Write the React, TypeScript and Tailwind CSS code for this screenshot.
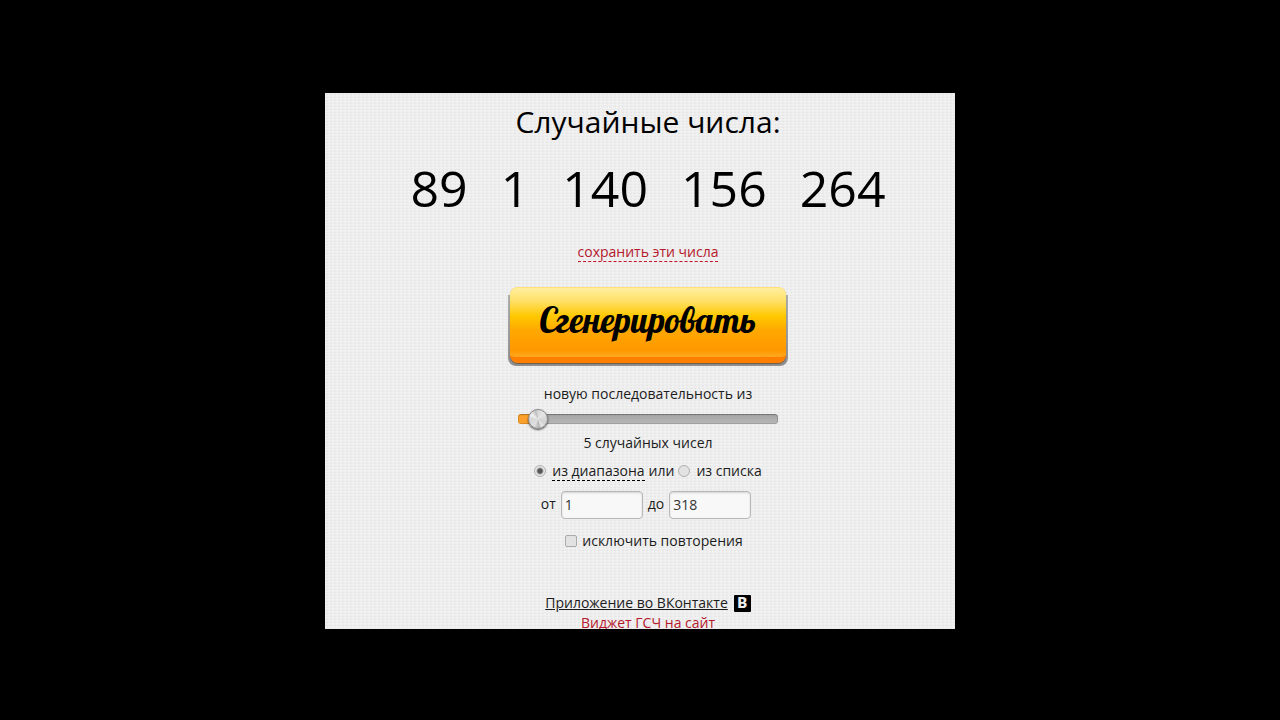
import { useState } from 'react'

type NumberFieldProps = {
  id: string
  label: string
  value: string
  onChange: (value: string) => void
}

const numbers = [89, 1, 140, 156, 264]

const MIN = 1
const MAX = 100

function NumberField({ id, label, value, onChange }: NumberFieldProps) {
  return (
    <div className="flex items-center gap-[5px]">
      <label htmlFor={id} className="pb-[2px]">
        {label}
      </label>
      <input
        id={id}
        type="text"
        value={value}
        onChange={(e) => onChange(e.target.value)}
        className="h-7 w-[82px] rounded border border-[#b8b8b8] bg-[#f8f8f8] px-[3px] pb-[2px] text-[#333] shadow-[inset_0_1px_2px_rgba(0,0,0,0.15)]"
      />
    </div>
  )
}

function CountSlider({ value, onChange }: { value: number; onChange: (value: number) => void }) {
  const percent = ((value - MIN) / (MAX - MIN)) * 100
  // the thumb is 20px wide, so its centre runs from 10px to 100% - 10px
  const stop = `calc(10px + (100% - 20px) * ${percent / 100})`

  return (
    <input
      type="range"
      aria-label="Количество чисел"
      min={MIN}
      max={MAX}
      value={value}
      onChange={(e) => onChange(Number(e.target.value))}
      style={{
        backgroundImage: `linear-gradient(to right, #fba12b ${stop}, transparent ${stop}), linear-gradient(#a4a4a4, #b8b8b8)`,
      }}
      className="block h-[10px] w-[260px] appearance-none rounded-[3px] shadow-[inset_0_0_0_1px_rgba(0,0,0,0.12),inset_0_1px_1px_rgba(0,0,0,0.2)] [&::-webkit-slider-thumb]:h-5 [&::-webkit-slider-thumb]:w-5 [&::-webkit-slider-thumb]:appearance-none [&::-webkit-slider-thumb]:rounded-full [&::-webkit-slider-thumb]:border [&::-webkit-slider-thumb]:border-[#8a8a8a] [&::-webkit-slider-thumb]:bg-[conic-gradient(#d8d8d8,#e6e6e6_12%,#d8d8d8_25%,#d2d2d2_35%,#e8e8e8_42%,#b4b4b4_48%,#e0e0e0_58%,#d6d6d6_75%,#f2f2f2_84%,#c0c0c0_95%,#d8d8d8)] [&::-webkit-slider-thumb]:shadow-[0_1px_2px_rgba(0,0,0,0.7)]"
    />
  )
}

const radioClass =
  'h-3 w-3 appearance-none rounded-full border border-[#b0b0b0] bg-[#e2e2e2] checked:bg-[radial-gradient(circle,#555_0,#555_2px,#e8e8e8_4px)]'

export default function App() {
  const [count, setCount] = useState(5)
  const [mode, setMode] = useState('range')
  const [from, setFrom] = useState('1')
  const [to, setTo] = useState('318')
  const [unique, setUnique] = useState(false)

  return (
    <div className="flex min-h-screen items-center justify-center bg-black pt-[2px] font-['Open_Sans','Noto_Sans',sans-serif] text-sm leading-5 text-[#1c1c1c]">
      <main className="flex w-full max-w-[630px] flex-col items-center overflow-hidden bg-[#eeeeee] bg-[radial-gradient(#e6e6e6_20%,transparent_50%),radial-gradient(#f3f3f3_20%,transparent_50%)] bg-[length:4px_3px] bg-[position:0_0,2px_1px] pt-[9px] pl-4">
        <h1 className="text-[30px] leading-10 text-black">Случайные числа:</h1>

        <div className="mt-4 flex gap-[33px] text-[50px] leading-[60px] text-black">
          {numbers.map((n) => (
            <span key={n}>{n}</span>
          ))}
        </div>

        <a href="#save" className="mt-6 h-5 border-b border-dashed border-[#c4142c] text-[#b5182c]">
          сохранить эти числа
        </a>

        <button
          type="button"
          className="mt-[25px] w-[280px] rounded-lg bg-[linear-gradient(transparent_8px,#b0b0b0_8px,#8f8f8f)] px-[2px] pb-[3px]"
        >
          <span className="block rounded-lg border-b-[6px] border-[#ff8000] bg-[linear-gradient(#fff0a4,#ffe066_20%,#ffc800_42%,#ffa800_62%,#ff9800_90%,#ffa81e)] pt-[13px] pb-[17px] text-center font-['Lobster','Liberation_Serif',serif] text-[35px] leading-10 font-normal text-black shadow-[0_1px_1px_#6b5a45,inset_0_1px_0_#ffe27a]">
            Сгенерировать
          </span>
        </button>

        <p className="mt-[18px]">новую последовательность из</p>
        <div className="mt-[10px]">
          <CountSlider value={count} onChange={setCount} />
        </div>
        <p className="mt-[9px]">{count} случайных чисел</p>

        <div className="mt-2 flex items-center gap-1">
          <label className="flex items-center gap-[6px]">
            <input
              type="radio"
              name="mode"
              checked={mode === 'range'}
              onChange={() => setMode('range')}
              className={radioClass}
            />
            <span className="h-5 border-b border-dashed border-black">из диапазона</span>
          </label>
          <span>или</span>
          <label className="flex items-center gap-[6px]">
            <input
              type="radio"
              name="mode"
              checked={mode === 'list'}
              onChange={() => setMode('list')}
              className={radioClass}
            />
            из списка
          </label>
        </div>

        <div className="mt-[10px] flex gap-[5px] pr-1">
          <NumberField id="from" label="от" value={from} onChange={setFrom} />
          <NumberField id="to" label="до" value={to} onChange={setTo} />
        </div>

        <label className="mt-3 flex items-center gap-[5px] pl-3">
          <input
            type="checkbox"
            checked={unique}
            onChange={(e) => setUnique(e.target.checked)}
            className="h-3 w-3 appearance-none rounded-[2px] border border-[#aaa] bg-[#e2e2e2] checked:bg-[#555]"
          />
          исключить повторения
        </label>

        <a href="#vk" className="mt-[42px] flex items-center gap-[6px]">
          <span className="underline">Приложение во ВКонтакте</span>
          <span className="flex h-[17px] w-[17px] items-center justify-center rounded-[1px] bg-black font-['Roboto','Liberation_Sans',sans-serif] text-[15px] leading-none font-black text-[#eee]">
            B
          </span>
        </a>
        <a href="#widget" className="h-4 text-[#b5182c]">
          Виджет ГСЧ на сайт
        </a>
      </main>
    </div>
  )
}
